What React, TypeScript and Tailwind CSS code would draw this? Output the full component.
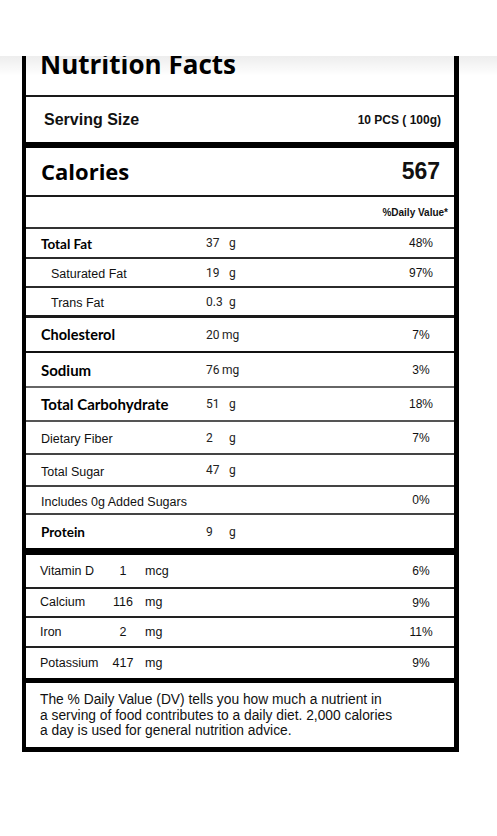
import React from 'react';

type Nutrient = {
  name: string;
  amount: string;
  unit: string;
  dv?: string;
  bold?: boolean;
  indent?: boolean;
  h: string;
  line: string;
  nameClass?: string;
};

const nutrients: Nutrient[] = [
  { name: 'Total Fat', amount: '37', unit: 'g', dv: '48%', bold: true, h: 'h-[28px]', line: 'border-b-2 border-[#2b2b2b]' },
  { name: 'Saturated Fat', amount: '19', unit: 'g', dv: '97%', indent: true, h: 'h-[27px]', line: 'border-b-2 border-[#2b2b2b]' },
  { name: 'Trans Fat', amount: '0.3', unit: 'g', indent: true, h: 'h-[27px]', line: 'border-b-[3px] border-[#1a1a1a]' },
  { name: 'Cholesterol', amount: '20', unit: 'mg', dv: '7%', bold: true, h: 'h-[33px]', line: 'border-b-2 border-[#111]', nameClass: 'text-[14.5px]' },
  { name: 'Sodium', amount: '76', unit: 'mg', dv: '3%', bold: true, h: 'h-[33px]', line: 'border-b-2 border-[#666]', nameClass: 'text-[15px]' },
  { name: 'Total Carbohydrate', amount: '51', unit: 'g', dv: '18%', bold: true, h: 'h-[32px]', line: 'border-b-2 border-[#555]', nameClass: 'text-[15px]' },
  { name: 'Dietary Fiber', amount: '2', unit: 'g', dv: '7%', h: 'h-[31px]', line: 'border-b-2 border-[#444]' },
  { name: 'Total Sugar', amount: '47', unit: 'g', h: 'h-[30px]', line: 'border-b-2 border-[#444]' },
  { name: 'Includes 0g Added Sugars', amount: '', unit: '', dv: '0%', h: 'h-[26px]', line: 'border-b-2 border-[#444]' },
  { name: 'Protein', amount: '9', unit: 'g', bold: true, h: 'h-[33px]', line: 'border-b-[7px] border-black' },
];

const vitamins = [
  { name: 'Vitamin D', amount: '1', unit: 'mcg', dv: '6%', h: 'h-[32px]' },
  { name: 'Calcium', amount: '116', unit: 'mg', dv: '9%', h: 'h-[27px]' },
  { name: 'Iron', amount: '2', unit: 'mg', dv: '11%', h: 'h-[28px]' },
  { name: 'Potassium', amount: '417', unit: 'mg', dv: '9%', h: 'h-[30px]', last: true },
];

const arial = "font-['Liberation_Sans',Arial,sans-serif]";
const lato = "font-['Lato','Open_Sans',sans-serif]";

function NutrientRow({ n }: { n: Nutrient }) {
  const unitGap = n.unit === 'mg' ? 'w-[16px]' : 'w-[23px]';
  return (
    <div className={`box-content flex items-center ${n.h} ${n.line} pl-[15px] pr-[13px] leading-none`}>
      <div className={`w-[165px] ${n.indent ? 'pl-[10px]' : ''}`}>
        {n.bold ? (
          <span className={`${lato} font-bold text-[13.5px] text-black ${n.nameClass ?? ''}`}>{n.name}</span>
        ) : (
          <span className={`${arial} text-[12.5px] text-[#111] whitespace-nowrap`}>{n.name}</span>
        )}
      </div>
      <div className="flex-1 flex items-center font-['Roboto',sans-serif] text-[12px] text-[#222]">
        {n.amount && <span className={`${unitGap} inline-block`}>{n.amount}</span>}
        {n.unit && <span>{n.unit}</span>}
      </div>
      <div className={`w-[40px] text-center ${arial} text-[12px] text-[#111]`}>{n.dv ?? ''}</div>
    </div>
  );
}

export default function App() {
  return (
    <div className="relative min-h-[836px] bg-white">
      <div className="pt-[56px] overflow-hidden">
        <div className="ml-[22px] w-[437px] border-l-4 border-r-[5px] border-black bg-white">
          <div className="h-[39px] overflow-hidden border-b-2 border-[#1a1a1a] pl-[14px] box-content">
            <div className="mt-[-5px] font-['Open_Sans',sans-serif] font-bold text-[26px] leading-none text-black">
              Nutrition Facts
            </div>
          </div>

          <div className={`flex items-center justify-between h-[45px] border-b-[6px] border-black pl-[18px] pr-[13px] box-content ${arial}`}>
            <span className="font-bold text-[16px] text-[#111]">Serving Size</span>
            <span className="font-bold text-[12px] text-[#111]">10 PCS ( 100g)</span>
          </div>

          <div className="flex items-center justify-between h-[47px] border-b-2 border-[#1a1a1a] pl-[15px] pr-[14px] box-content">
            <span className="font-['Open_Sans',sans-serif] font-bold text-[22px] text-black">Calories</span>
            <span className={`${arial} font-bold text-[23px] text-[#111]`}>567</span>
          </div>

          <div className="flex items-center justify-end h-[30px] border-b-2 border-[#333] pr-[6px] box-content">
            <span className={`${arial} font-bold text-[10px] text-[#111]`}>%Daily Value*</span>
          </div>

          {nutrients.map((n) => (
            <NutrientRow key={n.name} n={n} />
          ))}

          {vitamins.map((v) => (
            <div
              key={v.name}
              className={`box-content flex items-center ${v.h} pl-[14px] pr-[13px] leading-none ${v.last ? 'border-b-[5px] border-black' : 'border-b-2 border-[#222]'} ${arial} text-[12.5px] text-[#111]`}
            >
              <span className="w-[67px]">{v.name}</span>
              <span className="w-[32px] text-center">{v.amount}</span>
              <span className="ml-[6px] flex-1">{v.unit}</span>
              <span className="w-[40px] text-center text-[12px]">{v.dv}</span>
            </div>
          ))}

          <div className={`h-[55px] border-b-[5px] border-black pl-[14px] pt-[9px] box-content ${arial} text-[13.8px] leading-[15.5px] text-[#111]`}>
            The % Daily Value (DV) tells you how much a nutrient in
            <br />
            a serving of food contributes to a daily diet. 2,000 calories
            <br />
            a day is used for general nutrition advice.
          </div>
        </div>
      </div>
      <div className="pointer-events-none absolute left-0 top-[56px] h-[20px] w-full bg-linear-to-b from-black/[0.07] to-transparent" />
    </div>
  );
}
